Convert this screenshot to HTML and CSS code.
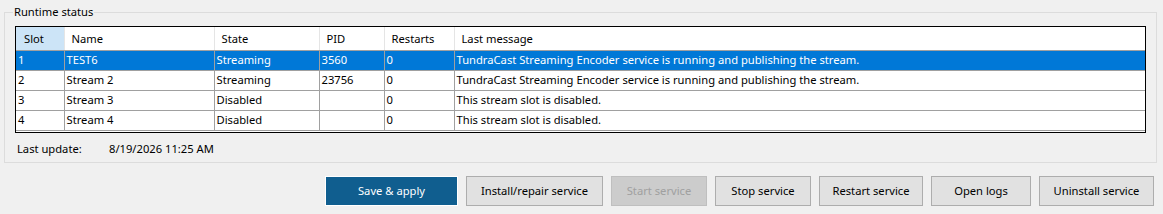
FILE: index.html
```html
<!DOCTYPE html>
<html>
<head>
<meta charset="utf-8">
<link rel="stylesheet" href="styles.css">
</head>
<body>
<div class="group">
  <div class="group-title">Runtime status</div>
  <div class="grid-wrap">
    <table class="grid">
      <colgroup>
        <col class="c-slot"><col class="c-name"><col class="c-state"><col class="c-pid"><col class="c-restarts"><col class="c-msg">
      </colgroup>
      <thead>
        <tr>
          <th class="sorted">Slot</th>
          <th>Name</th>
          <th>State</th>
          <th>PID</th>
          <th>Restarts</th>
          <th class="last">Last message</th>
        </tr>
      </thead>
      <tbody>
        <tr class="selected">
          <td>1</td><td>TEST6</td><td>Streaming</td><td>3560</td><td>0</td><td class="last">TundraCast Streaming Encoder service is running and publishing the stream.</td>
        </tr>
        <tr>
          <td>2</td><td>Stream 2</td><td>Streaming</td><td>23756</td><td>0</td><td class="last">TundraCast Streaming Encoder service is running and publishing the stream.</td>
        </tr>
        <tr>
          <td>3</td><td>Stream 3</td><td>Disabled</td><td></td><td>0</td><td class="last">This stream slot is disabled.</td>
        </tr>
        <tr>
          <td>4</td><td>Stream 4</td><td>Disabled</td><td></td><td>0</td><td class="last">This stream slot is disabled.</td>
        </tr>
      </tbody>
    </table>
  </div>
  <div class="status-line">
    <span class="status-label">Last update:</span>
    <span class="status-value">8/19/2026 11:25 AM</span>
  </div>
</div>
<div class="buttons">
  <button class="btn primary w-save">Save &amp; apply</button>
  <button class="btn w-install">Install/repair service</button>
  <button class="btn disabled w-start" disabled>Start service</button>
  <button class="btn w-stop">Stop service</button>
  <button class="btn w-restart">Restart service</button>
  <button class="btn w-logs">Open logs</button>
  <button class="btn w-uninstall">Uninstall service</button>
</div>
</body>
</html>
```
FILE: styles.css
```css
* { box-sizing: border-box; }
html, body {
  margin: 0;
  padding: 0;
  background: #f0f0f0;
  font-family: "Noto Sans", "Liberation Sans", sans-serif;
  font-size: 11.2px;
  color: #000;
}
.group {
  margin: 12px 6px 0 4px;
  border: 1px solid #dcdcdc;
  padding: 0 10px 6px 10px;
}
.group-title {
  margin: -8px 0 0 -2px;
  padding: 0 1px;
  width: fit-content;
  background: #f0f0f0;
  line-height: 14px;
  height: 14px;
  white-space: nowrap;
}
.grid-wrap {
  margin-top: 7px;
  border: 1px solid #000;
  background: #fff;
  padding-bottom: 1px;
}
.grid {
  width: 100%;
  table-layout: fixed;
  border-collapse: collapse;
  border-spacing: 0;
}
.c-slot { width: 48px; }
.c-name { width: 150px; }
.c-state { width: 105px; }
.c-pid { width: 65px; }
.c-restarts { width: 70px; }
.c-msg { width: auto; }
.grid th {
  height: 23px;
  padding: 0 0 0 7px;
  font-weight: normal;
  text-align: left;
  border-right: 1px solid #e5e5e5;
  border-bottom: 1px solid #a0a0a0;
  white-space: nowrap;
  overflow: hidden;
}
.grid th.sorted { background: #cce4f7; padding-left: 8px; }
.grid th.last, .grid td.last { border-right: none; }
.grid td {
  height: 20px;
  padding: 0 0 0 2px;
  border-right: 1px solid #a0a0a0;
  border-bottom: 1px solid #a0a0a0;
  white-space: nowrap;
  overflow: hidden;
  line-height: 18px;
}
.grid tr.selected td {
  background: #0078d7;
  color: #fff;
}
.status-line {
  margin: 9px 0 0 2px;
  height: 14px;
  line-height: 14px;
  display: flex;
}
.status-label { width: 92px; }
.buttons {
  display: flex;
  justify-content: flex-end;
  gap: 8px;
  margin: 13px 9px 0 0;
}
.btn {
  height: 30px;
  font-family: inherit;
  font-size: 11.2px;
  background: #e1e1e1;
  border: 1px solid #adadad;
  color: #000;
  padding: 0;
  margin: 0;
}
.btn.primary {
  background: #105e8f;
  border: 1px solid #ffffff;
  color: #fff;
}
.btn.disabled {
  background: #cccccc;
  border-color: #bfbfbf;
  color: #a0a0a0;
}
.w-save { width: 133px; }
.w-install { width: 137px; }
.w-start { width: 96px; }
.w-stop { width: 96px; }
.w-restart { width: 104px; }
.w-logs { width: 100px; }
.w-uninstall { width: 115px; }
```
